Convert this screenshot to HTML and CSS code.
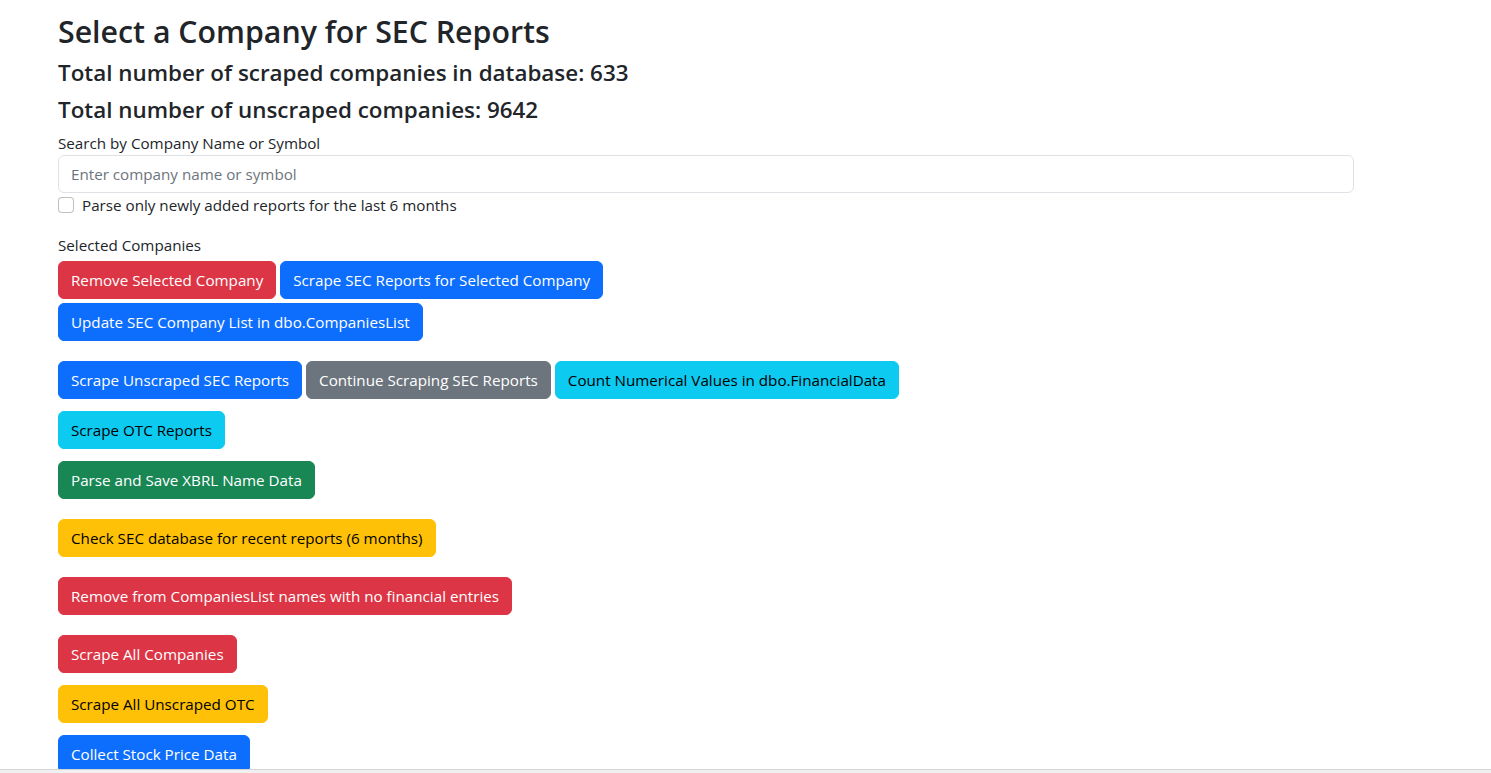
FILE: index.html
```html
<!DOCTYPE html>
<html lang="en">
<head>
    <meta charset="UTF-8">
    <meta name="viewport" content="width=device-width, initial-scale=1.0">
    <title>SEC Reports</title>
    <link rel="stylesheet" href="styles.css">
</head>
<body>
    <div class="container">
        <h2 class="title">Select a Company for SEC Reports</h2>
        <h4 class="count">Total number of scraped companies in database: 633</h4>
        <h4 class="count last">Total number of unscraped companies: 9642</h4>

        <label for="search" class="field-label">Search by Company Name or Symbol</label>
        <input type="text" id="search" class="form-control" placeholder="Enter company name or symbol">

        <div class="form-check">
            <input type="checkbox" id="recentOnly" class="check-input">
            <label for="recentOnly">Parse only newly added reports for the last 6 months</label>
        </div>

        <div class="selected-label">Selected Companies</div>

        <div class="btn-row">
            <button class="btn btn-danger">Remove Selected Company</button>
            <button class="btn btn-primary">Scrape SEC Reports for Selected Company</button>
        </div>
        <div class="btn-row gap-sm">
            <button class="btn btn-primary">Update SEC Company List in dbo.CompaniesList</button>
        </div>

        <div class="btn-row gap-lg">
            <button class="btn btn-primary">Scrape Unscraped SEC Reports</button>
            <button class="btn btn-secondary">Continue Scraping SEC Reports</button>
            <button class="btn btn-info">Count Numerical Values in dbo.FinancialData</button>
        </div>
        <div class="btn-row gap-md">
            <button class="btn btn-info">Scrape OTC Reports</button>
        </div>
        <div class="btn-row gap-md">
            <button class="btn btn-success">Parse and Save XBRL Name Data</button>
        </div>
        <div class="btn-row gap-lg">
            <button class="btn btn-warning">Check SEC database for recent reports (6 months)</button>
        </div>
        <div class="btn-row gap-lg">
            <button class="btn btn-danger">Remove from CompaniesList names with no financial entries</button>
        </div>
        <div class="btn-row gap-lg">
            <button class="btn btn-danger">Scrape All Companies</button>
        </div>
        <div class="btn-row gap-md">
            <button class="btn btn-warning">Scrape All Unscraped OTC</button>
        </div>
        <div class="btn-row gap-md">
            <button class="btn btn-primary">Collect Stock Price Data</button>
        </div>
    </div>

    <div class="scroll-track"></div>
</body>
</html>
```

FILE: styles.css
```css
html {
    overflow: hidden;
}
body {
    margin: 0;
    font-family: "Segoe UI", "Open Sans", sans-serif;
    font-size: 15.2px;
    line-height: 24px;
    color: #212529;
    background: #fff;
}
.container {
    width: 1296px;
    margin-left: 58px;
    padding-top: 13px;
}
h2, h4 {
    margin: 0 0 8px;
    font-weight: 600;
}
.title {
    font-size: 30.3px;
    line-height: 38px;
    margin-bottom: 7px;
}
.count {
    font-size: 22.4px;
    line-height: 29px;
}
.count.last {
    margin-bottom: 7px;
}
.field-label {
    display: block;
}
.form-control {
    display: block;
    box-sizing: border-box;
    width: 100%;
    height: 38px;
    padding: 6px 12px;
    font-family: inherit;
    font-size: 15.2px;
    line-height: 24px;
    color: #212529;
    border: 1px solid #dee2e6;
    border-radius: 6px;
    outline: none;
}
.form-control::placeholder {
    color: #6c757d;
}
.form-check {
    display: flex;
    align-items: center;
    min-height: 24px;
    margin-bottom: 2px;
}
.check-input {
    appearance: none;
    width: 16px;
    height: 16px;
    margin: 0 8px 0 0;
    border: 1px solid rgba(0, 0, 0, 0.25);
    border-radius: 4px;
    background: #fff;
}
.selected-label {
    margin-top: 16px;
}
.btn-row {
    display: flex;
    flex-wrap: wrap;
    gap: 4px;
    margin-top: 4px;
}
.btn-row.gap-md {
    margin-top: 12px;
}
.btn-row.gap-lg {
    margin-top: 20px;
}
.btn {
    height: 38px;
    padding: 6px 12px;
    font-family: inherit;
    font-size: 15.2px;
    line-height: 24px;
    border: 1px solid transparent;
    border-radius: 6px;
    cursor: pointer;
}
.btn-primary {
    background-color: #0d6efd;
    border-color: #0d6efd;
    color: #fff;
}
.btn-danger {
    background-color: #dc3545;
    border-color: #dc3545;
    color: #fff;
}
.btn-secondary {
    background-color: #6c757d;
    border-color: #6c757d;
    color: #fff;
}
.btn-success {
    background-color: #198754;
    border-color: #198754;
    color: #fff;
}
.btn-info {
    background-color: #0dcaf0;
    border-color: #0dcaf0;
    color: #000;
}
.btn-warning {
    background-color: #ffc107;
    border-color: #ffc107;
    color: #000;
}
.scroll-track {
    position: fixed;
    left: 0;
    right: 0;
    bottom: 0;
    height: 3px;
    background: #f0f0f0;
    border-top: 1px solid #d4d4d4;
}
```
